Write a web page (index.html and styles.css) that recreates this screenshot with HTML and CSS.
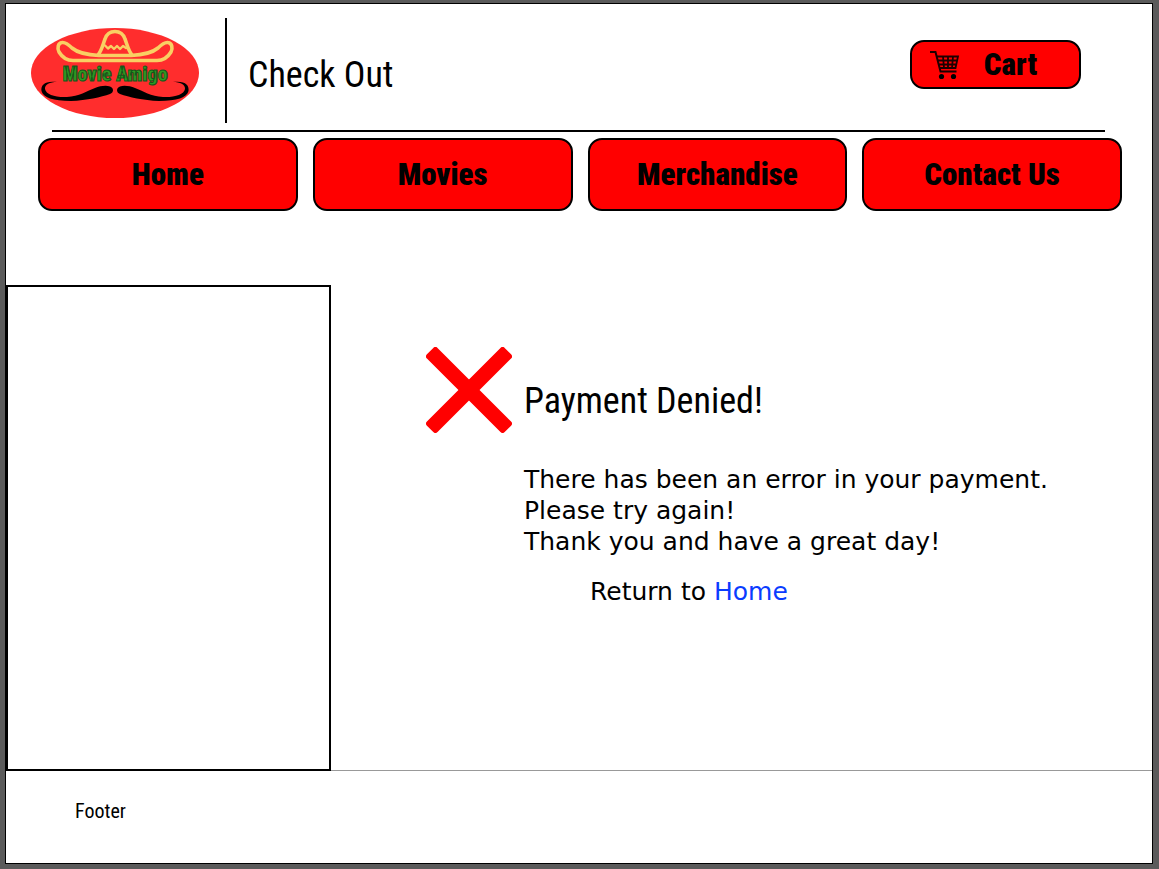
FILE: index.html
```html
<!DOCTYPE html>
<html lang="en">
<head>
<meta charset="utf-8">
<title>Movie Amigo - Check Out</title>
<link rel="stylesheet" href="styles.css">
</head>
<body>
<div class="page">
  <header class="header">
    <a class="logo" href="#" aria-label="Movie Amigo">
      <svg class="logo-art" viewBox="0 0 168 90">
        <ellipse cx="84" cy="45" rx="84" ry="45" fill="#ff2d2d"/>
        <g fill="none" stroke="#f9cf63" stroke-width="3.6" stroke-linecap="round" stroke-linejoin="round">
          <path d="M84 27.5H68C56 27 47 25 41 20C37 16 34 14 31 14.500C27 15 26 20 28 24C31 29 36 32.500 42 32.500H126C132 32.500 137 29 140 24C142 20 141 15 137 14.500C134 14 131 16 127 20C121 25 112 27 100 27.500Z"/>
          <path d="M67 27C71 22 72 16 74 11C76 5 80 3.500 84 3.500C88 3.500 92 5 94 11C96 16 97 22 101 27"/>
          <path d="M74 17.500L77 20.500L80 18L83 21L86 18L89 21L92 18L95 20" stroke-width="2.4"/>
        </g>
        <g fill="#000">
          <path id="half" d="M142 54C154 52.500 158.500 57 157.500 63C156 69.500 146 73 128 73C112 72.500 98 69 89 66C85 64.500 85 60 89 58.500C93 57 99 58 104 60C112 63 120 68.500 132 69C144 69.500 153 66.500 154 61C154.500 56.500 149 54 142 54Z"/>
          <use href="#half" transform="matrix(-1 0 0 1 168 0)"/>
        </g>
        <text class="logo-name" x="84" y="53" text-anchor="middle">Movie Amigo</text>
      </svg>
    </a>
    <h1 class="title">Check Out</h1>
    <button class="button cart" type="button">
      <svg class="cart-icon" viewBox="0 0 30 30" fill="none" stroke="#1c0000" stroke-width="2">
        <path d="M0 2H5.500L10.500 21.500H26.500"/>
        <path d="M6.500 6.500H28L25.500 18H10M8 10.500H27M9 14.500H26M13 6.500L14 18M18 6.500V18M23 6.500L22 18" stroke-width="1.800"/>
        <circle cx="11.500" cy="26.500" r="2.600" fill="#000" stroke="none"/>
        <circle cx="23.500" cy="26.500" r="2.600" fill="#000" stroke="none"/>
      </svg>
      Cart
    </button>
  </header>
  <nav class="nav" aria-label="Main">
    <a class="button nav-link" href="#">Home</a>
    <a class="button nav-link" href="#">Movies</a>
    <a class="button nav-link" href="#">Merchandise</a>
    <a class="button nav-link" href="#">Contact Us</a>
  </nav>
  <div class="content">
    <aside class="sidebar"></aside>
    <main class="result">
      <svg class="cross" viewBox="0 0 86 86" fill="#f00">
        <rect x="-12" y="35.500" width="110" height="15" rx="3" transform="rotate(45 43 43)"/>
        <rect x="-12" y="35.500" width="110" height="15" rx="3" transform="rotate(-45 43 43)"/>
      </svg>
      <h2 class="title">Payment Denied!</h2>
      <div class="message">
        <p>There has been an error in your payment.<br>Please try again!<br>Thank you and have a great day!</p>
        <p class="return">Return to <a href="#">Home</a></p>
      </div>
    </main>
  </div>
  <footer class="footer">Footer</footer>
</div>
</body>
</html>
```
FILE: styles.css
```css
* {
  box-sizing: border-box;
}

body {
  display: flex;
  min-height: 100vh;
  margin: 0;
  padding: 3px 6px 5px 5px;
  background: #5b5b5b;
  color: #000;
  font-family: "DejaVu Sans", Verdana, sans-serif;
}

h1, h2, p {
  margin: 0;
}

.page {
  display: flex;
  flex: 1;
  flex-direction: column;
  border: 1px solid #000;
  background: #fff;
}

.header {
  display: flex;
  align-items: center;
  margin: 0 47px 0 46px;
  padding: 14px 24px 7px 0;
  border-bottom: 2px solid #000;
}

.logo {
  display: flex;
  align-items: center;
  height: 105px;
  margin-left: -21px;
  padding: 4px 26px 0 0;
  border-right: 2px solid #000;
}

.logo-art {
  width: 168px;
  height: 90px;
}

.logo-name {
  fill: #2f9a22;
  stroke: #14571a;
  stroke-width: 1px;
  font: 900 20px "Roboto Condensed", Roboto, sans-serif;
}

.title {
  align-self: end;
  font: 400 36px/64px "Roboto Condensed", Roboto, sans-serif;
}

.header .title {
  padding: 0 0 16px 21px;
}

.button {
  display: flex;
  align-items: center;
  justify-content: center;
  border: 2px solid #000;
  border-radius: 14px;
  background: #f00;
  color: #000;
  font: 900 31px/40px "Roboto Condensed", Roboto, sans-serif;
  text-decoration: none;
}

.cart {
  gap: 24px;
  width: 171px;
  height: 49px;
  margin: 0 0 12px auto;
  padding: 0 24px 0 0;
}

.cart-icon {
  width: 30px;
  height: 30px;
}

.nav {
  display: grid;
  grid-template-columns: repeat(4, 1fr);
  gap: 15px;
  padding: 6px 30px 74px 32px;
}

.nav-link {
  height: 73px;
}

.content {
  display: flex;
  flex: 1;
}

.sidebar {
  width: 325px;
  border: 2px solid #000;
}

.result {
  display: grid;
  flex: 1;
  grid-template-columns: 86px 1fr;
  align-content: start;
  column-gap: 12px;
  padding: 62px 24px 24px 95px;
  border-bottom: 1px solid #999;
}

.cross {
  width: 86px;
  height: 86px;
}

.message {
  grid-column: 2;
  padding-top: 31px;
  font-size: 25px;
  line-height: 31px;
}

.return {
  padding: 19px 0 0 66px;
}

.return a {
  color: #0a3cff;
  text-decoration: none;
}

.footer {
  height: 92px;
  padding: 20px 69px;
  font: 400 20px/40px "Roboto Condensed", Roboto, sans-serif;
}
```
